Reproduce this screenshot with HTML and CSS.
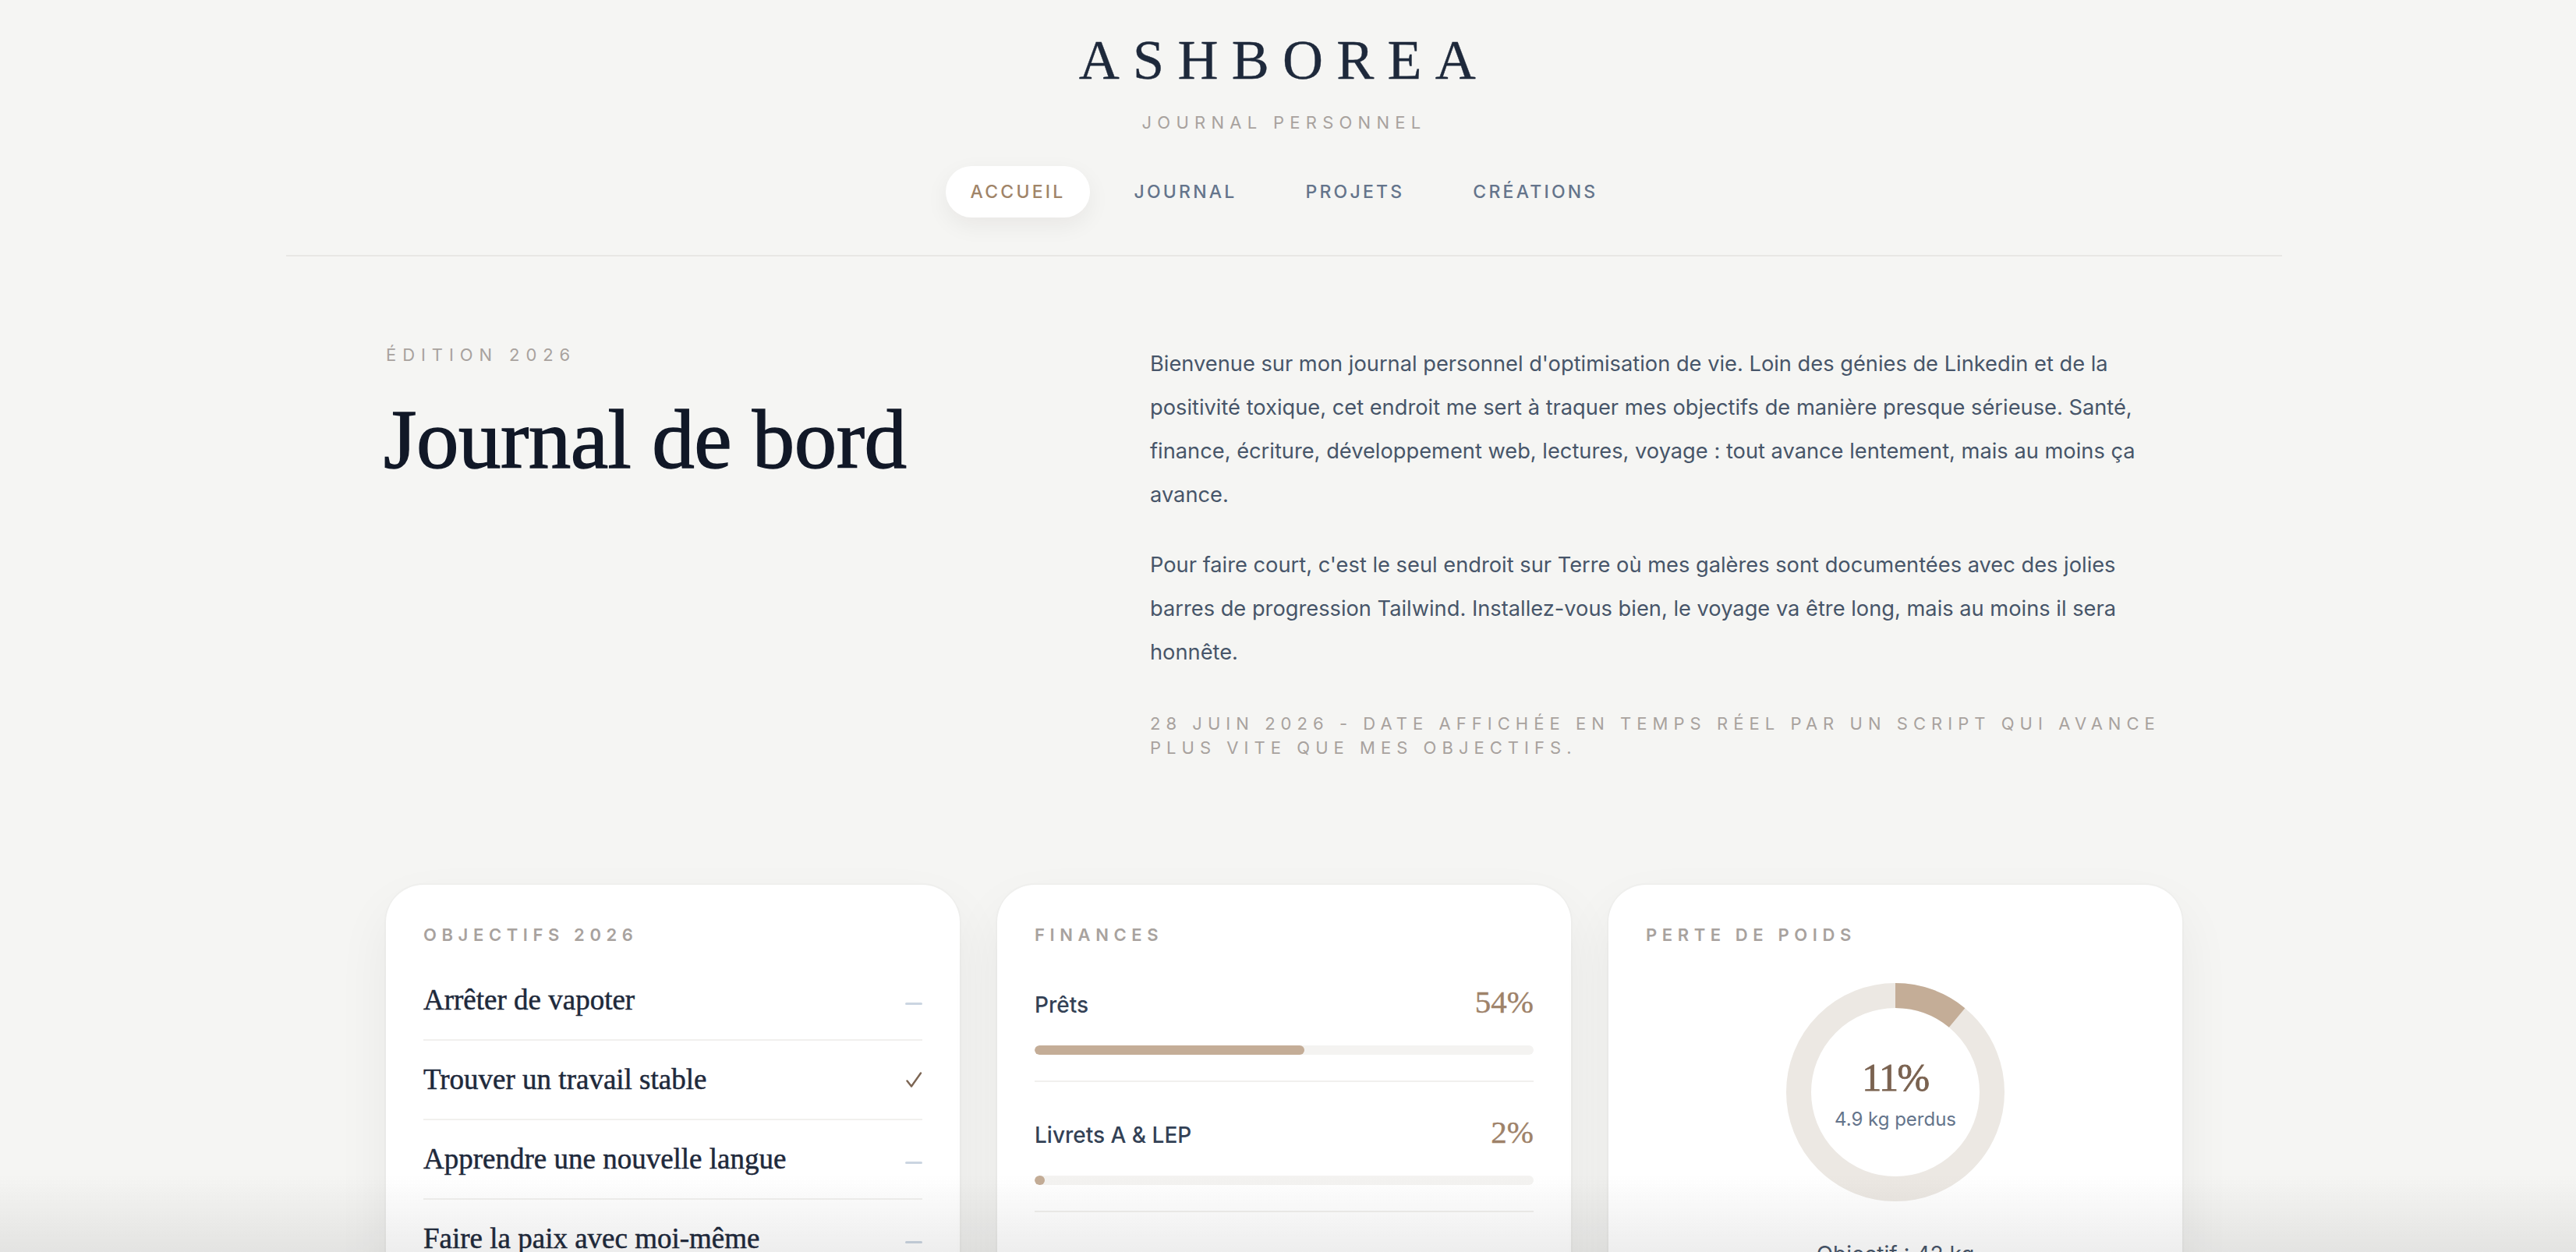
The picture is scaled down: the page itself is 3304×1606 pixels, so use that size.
FILE: index.html
```html
<!DOCTYPE html>
<html lang="fr">
<head>
<meta charset="utf-8">
<title>Ashborea — Journal personnel</title>
<link rel="stylesheet" href="styles.css">
</head>
<body>
<header class="site-header">
  <div class="brand">ASHBOREA</div>
  <div class="tagline">Journal personnel</div>
  <nav class="nav">
    <a class="nav-link is-active" href="#">Accueil</a>
    <a class="nav-link" href="#">Journal</a>
    <a class="nav-link" href="#">Projets</a>
    <a class="nav-link" href="#">Créations</a>
  </nav>
</header>

<main class="main">
  <section class="hero">
    <div class="hero-left">
      <p class="eyebrow">Édition 2026</p>
      <h1 class="hero-title">Journal de bord</h1>
    </div>
    <div class="hero-right">
      <p class="hero-text">Bienvenue sur mon journal personnel d'optimisation de vie. Loin des génies de Linkedin et de la positivité toxique, cet endroit me sert à traquer mes objectifs de manière presque sérieuse. Santé, finance, écriture, développement web, lectures, voyage : tout avance lentement, mais au moins ça avance.</p>
      <p class="hero-text">Pour faire court, c'est le seul endroit sur Terre où mes galères sont documentées avec des jolies barres de progression Tailwind. Installez-vous bien, le voyage va être long, mais au moins il sera honnête.</p>
      <p class="hero-note">28 juin 2026 - date affichée en temps réel par un script qui avance plus vite que mes objectifs.</p>
    </div>
  </section>

  <section class="cards">
    <article class="card">
      <h2 class="card-label">Objectifs 2026</h2>
      <ul class="goal-list">
        <li class="goal"><span class="goal-text">Arrêter de vapoter</span><span class="goal-dash"></span></li>
        <li class="goal"><span class="goal-text">Trouver un travail stable</span>
          <svg class="goal-check" width="22" height="20" viewBox="0 0 22 20" aria-hidden="true"><path d="M2.5 11.5 L8 18.5 L20 1.5" fill="none" stroke="#7c6553" stroke-width="2.4" stroke-linecap="round" stroke-linejoin="round"/></svg>
        </li>
        <li class="goal"><span class="goal-text">Apprendre une nouvelle langue</span><span class="goal-dash"></span></li>
        <li class="goal"><span class="goal-text">Faire la paix avec moi-même</span><span class="goal-dash"></span></li>
      </ul>
    </article>

    <article class="card">
      <h2 class="card-label">Finances</h2>
      <div class="fin-list">
        <div class="fin-row">
          <div class="fin-head"><span class="fin-name">Prêts</span><span class="fin-value">54%</span></div>
          <div class="bar"><div class="bar-fill" style="width:54%"></div></div>
        </div>
        <div class="fin-row">
          <div class="fin-head"><span class="fin-name">Livrets A &amp; LEP</span><span class="fin-value">2%</span></div>
          <div class="bar"><div class="bar-fill" style="width:2%"></div></div>
        </div>
      </div>
    </article>

    <article class="card card-weight">
      <h2 class="card-label">Perte de poids</h2>
      <div class="donut">
        <svg class="donut-svg" width="280" height="280" viewBox="0 0 280 280" aria-hidden="true">
          <circle cx="140" cy="140" r="124" fill="none" stroke="#ece8e3" stroke-width="32"/>
          <circle cx="140" cy="140" r="124" fill="none" stroke="#c4ad97" stroke-width="32" stroke-dasharray="85.7 779.1" transform="rotate(-90 140 140)"/>
        </svg>
        <div class="donut-center">
          <div class="donut-value">11%</div>
          <div class="donut-sub">4.9 kg perdus</div>
        </div>
      </div>
      <p class="weight-target">Objectif : 42 kg</p>
    </article>
  </section>
</main>
<div class="bottom-fade"></div>
</body>
</html>
```

FILE: styles.css
```css
* { box-sizing: border-box; }

body {
  margin: 0;
  padding-right: 10px;
  background: #f5f5f3;
  font-family: Inter, "Noto Sans", sans-serif;
  color: #334155;
}

.site-header {
  width: 2560px;
  margin: 0 auto;
  padding: 37px 0 48px;
  border-bottom: 2px solid #e8e7e4;
  display: flex;
  flex-direction: column;
  align-items: center;
}

.brand {
  font-family: "Liberation Serif", serif;
  font-size: 72px;
  line-height: 80px;
  letter-spacing: 0.24em;
  color: #1e293b;
  -webkit-text-stroke: 0.4px #1e293b;
}

.tagline {
  margin-top: 24px;
  font-size: 22px;
  line-height: 32px;
  letter-spacing: 0.33em;
  text-transform: uppercase;
  color: #a8a29e;
}

.nav {
  margin-top: 40px;
  display: flex;
  gap: 24px;
}

.nav-link {
  padding: 17px 32px;
  border-radius: 999px;
  font-size: 23px;
  line-height: 32px;
  font-weight: 500;
  letter-spacing: 0.14em;
  text-transform: uppercase;
  text-decoration: none;
  color: #64748b;
}

.nav-link.is-active {
  background: #fff;
  color: #a08468;
  box-shadow: 0 10px 30px rgba(28, 25, 23, 0.06);
}

.main {
  width: 2304px;
  margin: 0 auto;
}

.hero {
  display: grid;
  grid-template-columns: repeat(12, 1fr);
  column-gap: 48px;
  padding-top: 110px;
}

.hero-left { grid-column: span 5; }
.hero-right { grid-column: span 7; max-width: 1308px; }

.eyebrow {
  margin: 0;
  font-size: 22px;
  line-height: 32px;
  letter-spacing: 0.36em;
  text-transform: uppercase;
  color: #a8a29e;
}

.hero-title {
  margin: 40px 0 0 -3px;
  font-family: "Liberation Serif", serif;
  font-weight: 400;
  font-size: 109px;
  line-height: 106px;
  letter-spacing: -0.5px;
  color: #111827;
  -webkit-text-stroke: 1.4px #111827;
}

.hero-text {
  margin: 0;
  font-size: 27.25px;
  line-height: 56px;
  color: #475569;
}

.hero-text + .hero-text { margin-top: 34px; }

.hero-note {
  margin: 48px 0 0;
  font-size: 22px;
  line-height: 31px;
  letter-spacing: 0.32em;
  text-transform: uppercase;
  color: #a8a29e;
}

.cards {
  display: grid;
  grid-template-columns: repeat(3, 1fr);
  gap: 48px;
  margin-top: 160px;
  padding-bottom: 120px;
}

.card {
  background: #fff;
  border-radius: 48px;
  padding: 48px;
  box-shadow: 0 0 0 2px rgba(28, 25, 23, 0.015), 0 30px 70px rgba(28, 25, 23, 0.06);
}

.card-label {
  margin: 0;
  font-size: 22px;
  line-height: 32px;
  font-weight: 600;
  letter-spacing: 0.3em;
  text-transform: uppercase;
  color: #a8a29e;
}

.goal-list {
  list-style: none;
  margin: 18px 0 0;
  padding: 0;
}

.goal {
  display: flex;
  justify-content: space-between;
  align-items: center;
  padding: 32px 0;
  border-bottom: 2px solid #f1f0ee;
}

.goal-text {
  font-family: "Liberation Serif", serif;
  font-size: 37px;
  line-height: 36px;
  color: #1e293b;
  -webkit-text-stroke: 0.5px #1e293b;
}

.goal-dash {
  width: 22px;
  height: 3px;
  margin-top: 8px;
  background: #cbd5e1;
  border-radius: 2px;
}

.goal-check { display: block; }

.fin-list { margin-top: 6px; }

.fin-row {
  padding: 36px 0 33px;
  border-bottom: 2px solid #f1f0ee;
}

.fin-head {
  display: flex;
  justify-content: space-between;
  align-items: baseline;
}

.fin-name {
  font-size: 28px;
  line-height: 40px;
  font-weight: 500;
  color: #334155;
}

.fin-value {
  font-family: "Liberation Serif", serif;
  font-size: 41px;
  line-height: 56px;
  color: #9e8269;
  -webkit-text-stroke: 0.4px #9e8269;
}

.bar {
  margin-top: 28px;
  height: 12px;
  border-radius: 999px;
  background: #f4f3f1;
  overflow: hidden;
}

.bar-fill {
  height: 100%;
  border-radius: 999px;
  background: #c4ad97;
}

.donut {
  margin: 46px auto 0;
  width: 280px;
  height: 280px;
  display: grid;
  place-items: center;
}

.donut > * { grid-area: 1 / 1; }

.donut-svg { display: block; }

.donut-center {
  display: flex;
  flex-direction: column;
  align-items: center;
  padding-top: 8px;
}

.donut-value {
  font-family: "Liberation Serif", serif;
  font-size: 50px;
  line-height: 48px;
  letter-spacing: -1.5px;
  color: #7a6250;
  -webkit-text-stroke: 0.8px #7a6250;
}

.donut-sub {
  margin-top: 14px;
  font-size: 24px;
  line-height: 32px;
  color: #64748b;
}

.weight-target {
  margin: 48px 0 0;
  text-align: center;
  font-size: 28px;
  line-height: 40px;
  color: #475569;
}

.bottom-fade {
  position: fixed;
  left: 0;
  right: 0;
  bottom: 0;
  height: 100px;
  background: linear-gradient(to bottom, rgba(30, 30, 30, 0), rgba(30, 30, 30, 0.08));
  pointer-events: none;
}
```
